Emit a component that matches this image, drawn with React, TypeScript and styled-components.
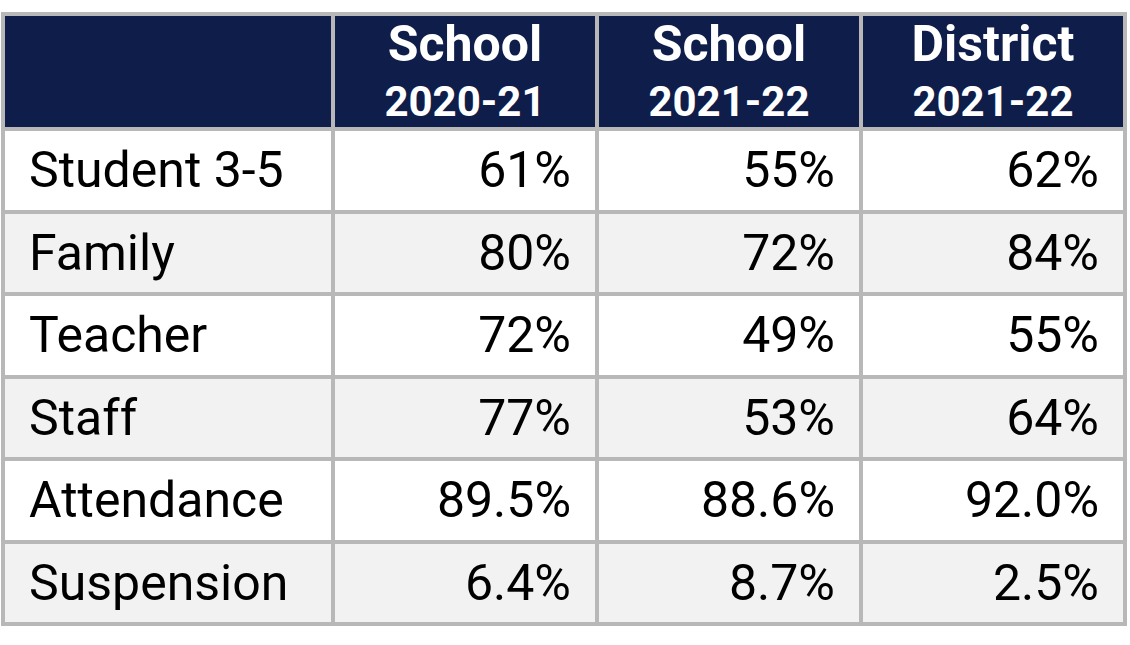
import React from "react";
import styled, { createGlobalStyle } from "styled-components";

const GlobalStyle = createGlobalStyle`
  html, body {
    margin: 0;
    padding: 0;
    background: #ffffff;
  }
  body {
    font-family: Roboto, "Liberation Sans", Arial, sans-serif;
  }
`;

const rows = [
  { label: "Student 3-5", values: ["61%", "55%", "62%"] },
  { label: "Family", values: ["80%", "72%", "84%"] },
  { label: "Teacher", values: ["72%", "49%", "55%"] },
  { label: "Staff", values: ["77%", "53%", "64%"] },
  { label: "Attendance", values: ["89.5%", "88.6%", "92.0%"] },
  { label: "Suspension", values: ["6.4%", "8.7%", "2.5%"] },
];

const columns = [
  { title: "School", year: "2020-21" },
  { title: "School", year: "2021-22" },
  { title: "District", year: "2021-22" },
];

function App() {
  return (
    <>
      <GlobalStyle />
      <Page>
        <Table>
          <HeaderCell />
          {columns.map((c, i) => (
            <HeaderCell key={i}>
              <HeadTitle>{c.title}</HeadTitle>
              <HeadYear>{c.year}</HeadYear>
            </HeaderCell>
          ))}
          {rows.map((r, i) => (
            <React.Fragment key={r.label}>
              <LabelCell $alt={i % 2 === 1}>{r.label}</LabelCell>
              {r.values.map((v, j) => (
                <ValueCell key={j} $alt={i % 2 === 1}>
                  {v}
                </ValueCell>
              ))}
            </React.Fragment>
          ))}
        </Table>
      </Page>
    </>
  );
}

const Page = styled.div`
  padding: 12px 0 0 1px;
`;

const Table = styled.div`
  display: inline-grid;
  grid-template-columns: 326px repeat(3, 260px);
  grid-template-rows: 111px repeat(6, 78.5px);
  gap: 4px;
  padding: 4px;
  background: #b8b8b8;
`;

const HeaderCell = styled.div`
  background: #0f1d4a;
  color: #ffffff;
  font-weight: 700;
  display: flex;
  flex-direction: column;
  align-items: center;
  justify-content: center;
`;

const HeadTitle = styled.div`
  font-size: 50px;
  line-height: 60px;
`;

const HeadYear = styled.div`
  font-size: 42px;
  line-height: 56px;
`;

const BodyCell = styled.div<{ $alt?: boolean }>`
  background: ${(p) => (p.$alt ? "#f2f2f2" : "#ffffff")};
  color: #000000;
  font-size: 50px;
  display: flex;
  align-items: center;
  white-space: nowrap;
`;

const LabelCell = styled(BodyCell)`
  padding-left: 24px;
`;

const ValueCell = styled(BodyCell)`
  justify-content: flex-end;
  padding-right: 24px;
`;

export default App;
